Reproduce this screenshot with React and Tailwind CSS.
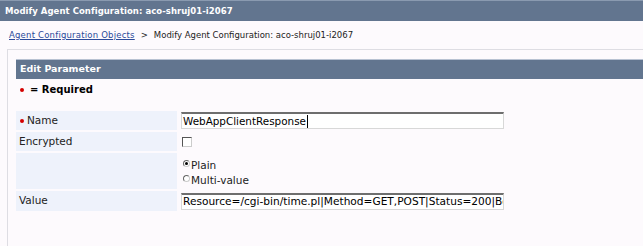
export default function App() {
  const font = { fontFamily: '"DejaVu Sans", Verdana, sans-serif' };
  return (
    <div className="w-[643px] h-[246px] overflow-hidden bg-[#fdfafd]" style={font}>
      <div className="h-[21px] bg-[#62758f] border-t border-[#8a9ab0] flex items-center pl-[5px] text-white font-bold text-[8.5px] tracking-[0.05px]">
        Modify Agent Configuration: aco-shruj01-i2067
      </div>
      <div className="h-[28px] flex items-center pl-[9px] text-[8.5px] text-[#222]">
        <span className="text-[#2a4a9a] underline tracking-[0.2px]">Agent Configuration Objects</span>
        <span className="mx-[6px]">&gt;</span>
        <span>Modify Agent Configuration: aco-shruj01-i2067</span>
      </div>
      <div className="ml-[7px] border-l border-t border-[#dedde3] h-[200px] pt-[9px] pl-[8px]">
        <div className="h-[20px] bg-[#62758f] border-t border-[#b8c2d2] flex items-center pl-[4px] text-white font-bold text-[9.5px]">
          Edit Parameter
        </div>
        <div className="h-[21px] flex items-center pl-[4px] text-[10px] font-bold text-black">
          <span className="w-[4px] h-[4px] rounded-full bg-[#d40000] mr-[6px]" />= Required
        </div>
        <div className="h-[11px]" />
        <div className="flex flex-col gap-[2px] text-[10.5px] text-[#222]">
          <div className="flex gap-[4px] h-[19px]">
            <div className="w-[161px] bg-[#eef2fb] flex items-center pl-[4px]">
              <span className="w-[4px] h-[4px] rounded-full bg-[#d40000] mr-[3px]" />Name
            </div>
            <div className="flex items-center">
              <div className="w-[323px] h-[17px] border border-[#d8d8d8] border-t-2 border-t-[#6e6e6e] bg-white flex items-center pl-[1px] text-[10.4px] text-black leading-none">
                WebAppClientResponse<span className="w-px h-[13px] bg-black ml-px" />
              </div>
            </div>
          </div>
          <div className="flex gap-[4px] h-[19px]">
            <div className="w-[161px] bg-[#eef2fb] flex items-center pl-[3px]">Encrypted</div>
            <div className="flex items-center pl-[1px]">
              <div className="w-[10px] h-[10px] border border-[#555] border-r-[#ccc] border-b-[#ccc] bg-white" />
            </div>
          </div>
          <div className="flex gap-[4px] h-[36px]">
            <div className="w-[161px] bg-[#eef2fb]" />
            <div className="flex flex-col justify-center pt-[3px] pl-[2px] leading-[15px]">
              <div className="flex items-center">
                <span className="w-[7px] h-[7px] rounded-full border border-[#666] border-b-[#ccc] border-r-[#ccc] bg-white mr-[1px] -mt-[4px] flex items-center justify-center">
                  <span className="w-[3px] h-[3px] rounded-full bg-black" />
                </span>
                Plain
              </div>
              <div className="flex items-center">
                <span className="w-[7px] h-[7px] rounded-full border border-[#666] border-b-[#ccc] border-r-[#ccc] bg-white mr-[1px] -mt-[4px]" />
                Multi-value
              </div>
            </div>
          </div>
          <div className="flex gap-[4px] h-[20px]">
            <div className="w-[161px] bg-[#eef2fb] flex items-center pl-[3px]">Value</div>
            <div className="flex items-center">
              <div className="w-[323px] h-[17px] border border-[#d8d8d8] border-t-2 border-t-[#6e6e6e] bg-white flex items-center pl-[1px] text-[10.6px] text-black leading-none overflow-hidden whitespace-nowrap">
                Resource=/cgi-bin/time.pl|Method=GET,POST|Status=200|Body=
              </div>
            </div>
          </div>
        </div>
      </div>
    </div>
  );
}
